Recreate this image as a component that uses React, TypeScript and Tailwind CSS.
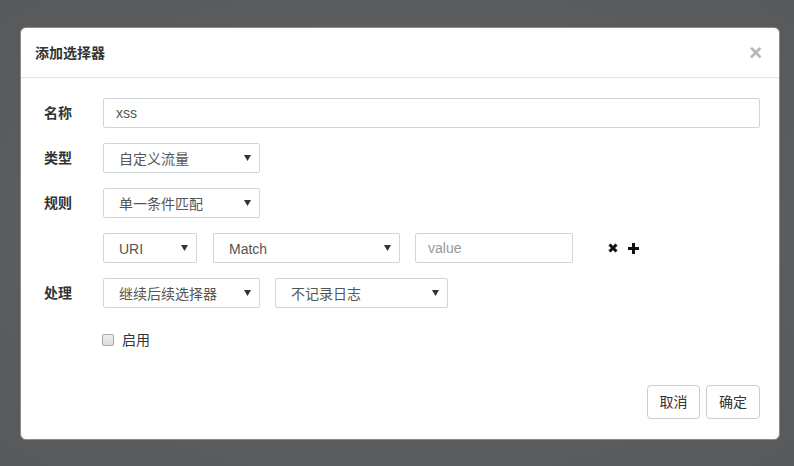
import React from 'react';

const FONT = 'font-["Liberation_Sans","Noto_Sans_CJK_SC",sans-serif]';

interface SelectProps {
    value: string;
    width: string;
}

// Native-looking select box with a small dark caret
const FakeSelect: React.FC<SelectProps> = ({ value, width }) => (
    <div className={`${width} h-[30px] shrink-0 flex items-center justify-between border border-[#cdd6d8] rounded-[2px] bg-white pl-[15px] pr-[8px] text-[14px] leading-none text-[#555]`}>
        <span className="pt-[1px]">{value}</span>
        <svg width="7" height="6" viewBox="0 0 7 6" className="shrink-0">
            <path d="M0 0 L7 0 L3.5 6 Z" fill="#333" />
        </svg>
    </div>
);

const Label: React.FC<{ text: string }> = ({ text }) => (
    <div className="w-[59px] shrink-0 text-[14px] font-bold text-[#333] leading-none">{text}</div>
);

const App: React.FC = () => {
    return (
        <div className={`${FONT} w-full h-[466px] bg-[radial-gradient(ellipse_at_center,#666768_0%,#5b5c5d_70%,#58595a_100%)] pt-[27px] px-[20px]`}>
            <div className="w-[760px] h-[413px] bg-white rounded-[6px] border border-[#8a8a8a] flex flex-col overflow-hidden">
                {/* Header */}
                <div className="h-[50px] shrink-0 flex items-center justify-between pl-[14px] pr-[17px] border-b border-[#e5e5e5]">
                    <h4 className="text-[14px] font-bold text-[#333] leading-none">添加选择器</h4>
                    <span className="text-[22px] font-bold text-[#b5b5b5] leading-none font-['Liberation_Sans',sans-serif]">×</span>
                </div>

                {/* Body */}
                <div className="flex-1 pt-[20px] pl-[23px] pr-[19px] flex flex-col gap-[15px]">
                    <div className="flex items-center h-[30px]">
                        <Label text="名称" />
                        <div className="flex-1 h-[30px] flex items-center border border-[#cdd6d8] rounded-[2px] px-[12px] text-[14px] text-[#555] leading-none">
                            xss
                        </div>
                    </div>

                    <div className="flex items-center h-[30px]">
                        <Label text="类型" />
                        <FakeSelect value="自定义流量" width="w-[157px]" />
                    </div>

                    <div className="flex items-center h-[30px]">
                        <Label text="规则" />
                        <FakeSelect value="单一条件匹配" width="w-[157px]" />
                    </div>

                    <div className="flex items-center h-[30px] pl-[59px]">
                        <FakeSelect value="URI" width="w-[94px]" />
                        <div className="ml-[16px]">
                            <FakeSelect value="Match" width="w-[187px]" />
                        </div>
                        <div className="ml-[15px] w-[158px] h-[30px] flex items-center border border-[#cdd6d8] rounded-[2px] px-[12px] text-[14px] text-[#999] leading-none">
                            value
                        </div>
                        <div className="flex items-center gap-[10px] ml-[35px]">
                            <svg width="10" height="10" viewBox="0 0 10 10">
                                <path d="M1.5 1.5 L8.5 8.5 M8.5 1.5 L1.5 8.5" stroke="#111" strokeWidth="3" />
                            </svg>
                            <svg width="11" height="11" viewBox="0 0 11 11">
                                <path d="M5.5 0 V11 M0 5.5 H11" stroke="#111" strokeWidth="3" />
                            </svg>
                        </div>
                    </div>

                    <div className="flex items-center h-[30px]">
                        <Label text="处理" />
                        <div className="flex gap-[15px]">
                            <FakeSelect value="继续后续选择器" width="w-[157px]" />
                            <FakeSelect value="不记录日志" width="w-[173px]" />
                        </div>
                    </div>

                    <div className="flex items-center h-[34px] pl-[58px] gap-[8px]">
                        <span className="w-[12px] h-[12px] rounded-[2px] border border-[#a9a9a9] bg-gradient-to-b from-[#f0f0f0] to-[#dcdcdc]" />
                        <span className="text-[14px] text-[#333] leading-none">启用</span>
                    </div>
                </div>

                {/* Footer */}
                <div className="flex justify-end gap-[6px] pr-[19px] pb-[20px]">
                    <button className="w-[53px] h-[34px] border border-[#ccc] rounded-[4px] bg-white text-[14px] text-[#333] leading-none">取消</button>
                    <button className="w-[54px] h-[34px] border border-[#ccc] rounded-[4px] bg-white text-[14px] text-[#333] leading-none">确定</button>
                </div>
            </div>
        </div>
    );
};

export default App;
